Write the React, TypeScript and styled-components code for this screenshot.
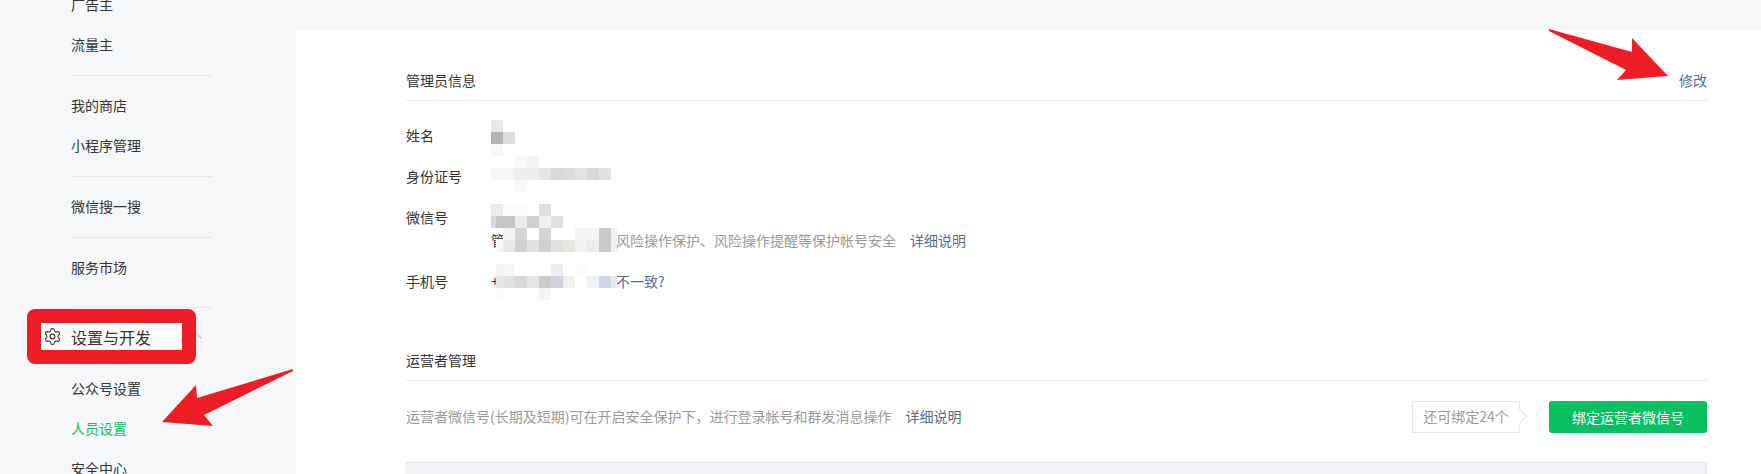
import React from 'react';
import styled, { createGlobalStyle } from 'styled-components';
import { Settings } from 'lucide-react';

const GlobalStyle = createGlobalStyle`
	html, body {
		margin: 0;
		padding: 0;
		height: 100%;
		overflow: hidden;
		background: #f6f7f9;
	}

	body {
		font-family: "Noto Sans CJK SC", "Noto Sans", sans-serif;
		font-size: 14px;
		color: #353535;
	}
`;

const Page = styled.div`
	position: relative;
	display: flex;
	width: 1761px;
	height: 474px;
	overflow: hidden;
`;

const Sidebar = styled.nav`
	flex: 0 0 296px;
	margin-top: -15px;
`;

const Group = styled.div<{ $tail?: number }>`
	width: 141px;
	margin-left: 71px;
	padding: 10px 0 ${(p) => p.$tail ?? 10}px;
	border-bottom: 1px solid #e4e6ea;
`;

const FirstGroup = styled(Group)`
	padding-top: 0;
`;

const NavItem = styled.div<{ $active?: boolean }>`
	height: 40px;
	line-height: 38px;
	color: ${(p) => (p.$active ? '#07c160' : '#353535')};
	white-space: nowrap;
`;

const OpenGroup = styled.div`
	padding-left: 71px;
`;

const GroupHead = styled.div`
	display: flex;
	align-items: center;
	height: 27px;
	margin: 15px 0 19px -30px;
`;

const HeadLabel = styled.div`
	position: relative;
	z-index: 1;
	display: flex;
	align-items: center;
	gap: 9px;
	box-sizing: border-box;
	width: 140px;
	height: 27px;
	padding-left: 2px;
	background: #fff;
	font-size: 16px;
	white-space: nowrap;

	&::before {
		content: '';
		position: absolute;
		inset: -14px -15px -14px -14px;
		border: 14px solid #ee1c25;
		border-radius: 8px;
		pointer-events: none;
	}
`;

const Chevron = styled.span`
	flex: none;
	width: 14px;
	height: 14px;
	margin-left: 4px;
	box-sizing: border-box;
	border-top: 1px solid #b4b4b4;
	border-left: 1px solid #b4b4b4;
	transform: translateY(1px) rotate(45deg);
`;

const Card = styled.main`
	flex: 1;
	margin-top: 30px;
	padding: 30px 54px 0 110px;
	background: #fff;
	border-radius: 3px 0 0 0;
`;

const SectionHead = styled.div`
	display: flex;
	align-items: center;
	justify-content: space-between;
	box-sizing: border-box;
	height: 41px;
	padding-bottom: 1px;
	border-bottom: 1px solid #e7e7eb;
`;

const Link = styled.a`
	color: #576b95;
	text-decoration: none;
`;

const InfoList = styled.div`
	padding: 15px 0 37px;
`;

const InfoRow = styled.div`
	display: flex;
	padding: 8px 0 10px;
	line-height: 23px;
`;

const RowLabel = styled.div`
	flex: 0 0 85px;
`;

const RowValue = styled.div`
	color: #9a9a9a;
`;

const ValueLine = styled.div`
	display: flex;
	white-space: nowrap;
`;

const Masked = styled.span<{ $width: number }>`
	display: inline-block;
	width: ${(p) => p.$width}px;
	overflow: hidden;
	color: #353535;
`;

const Gap = styled.span`
	width: 14px;
`;

const OperatorBar = styled.div`
	display: flex;
	align-items: center;
	height: 32px;
	margin-top: 20px;
`;

const Hint = styled.div`
	flex: 1;
	padding-bottom: 2px;
	color: #9a9a9a;
	white-space: nowrap;
`;

const HintLink = styled(Link)`
	margin-left: 14px;
`;

const Quota = styled.div`
	position: relative;
	box-sizing: border-box;
	width: 108px;
	height: 32px;
	line-height: 29px;
	margin-right: 29px;
	text-align: center;
	color: #9a9a9a;
	border: 1px solid #e7e7eb;
	background: #fff;

	&::after {
		content: '';
		position: absolute;
		top: 9px;
		right: -6px;
		width: 10px;
		height: 10px;
		background: #fff;
		border-top: 1px solid #e7e7eb;
		border-right: 1px solid #e7e7eb;
		transform: rotate(45deg);
	}
`;

const PrimaryButton = styled.button`
	width: 158px;
	height: 32px;
	padding: 0;
	border: 0;
	border-radius: 3px;
	background: #07c160;
	color: #fff;
	font: inherit;
`;

const TableHead = styled.div`
	height: 40px;
	margin-top: 29px;
	background: #f2f3f7;
	border: 1px solid #e7e7eb;
	border-bottom: 0;
`;

const Overlay = styled.svg`
	position: absolute;
	top: 0;
	left: 0;
	pointer-events: none;
`;

type Cell = [number, number, number, string];

// redacted patches from the screenshot: x, y, width, colour
const cellHeight = 12;
const mosaic: Cell[] = [
	[491, 120, 12, '#e9e8e8'],
	[491, 132, 12, '#b5b1ae'], [503, 132, 12, '#dcdcde'],
	[491, 144, 12, '#f6f6f6'],

	[515, 156, 12, '#f9f9f9'], [527, 156, 12, '#f3f3f3'],
	[491, 168, 12, '#f5f5f6'], [503, 168, 12, '#f5f5f6'], [515, 168, 12, '#eeeff1'], [527, 168, 12, '#eeeeef'],
	[539, 168, 12, '#e5e5e6'], [551, 168, 12, '#d9d9dd'], [563, 168, 12, '#dddbde'], [575, 168, 12, '#e4e4e0'],
	[587, 168, 12, '#d7d8dd'], [599, 168, 12, '#e3e2df'], [611, 168, 5, '#fcfcfe'],
	[515, 180, 12, '#f6f7f7'],

	[491, 204, 12, '#ebebeb'], [503, 204, 12, '#fafafa'], [515, 204, 12, '#fbfbfb'], [539, 204, 12, '#e0dfdf'],
	[491, 216, 5, '#d8d8d8'], [496, 216, 19, '#c4c5c5'], [515, 216, 12, '#eaeaea'], [527, 216, 12, '#cfcfd2'],
	[539, 216, 12, '#efeff0'], [551, 216, 12, '#e1e1e1'],
	[503, 228, 12, '#f2f2f2'], [515, 228, 12, '#d6d6d6'], [539, 228, 12, '#d5d5d5'],
	[575, 228, 12, '#f3f5f4'], [587, 228, 12, '#f4f4f4'], [599, 228, 12, '#c8c8c8'], [611, 228, 6, '#f0f0f0'],
	[496, 240, 7, '#f6f6f6'], [503, 240, 12, '#e8e9e9'], [515, 240, 12, '#d2d0d0'], [527, 240, 12, '#e0e1e1'],
	[539, 240, 12, '#cfcfcf'], [551, 240, 12, '#e4e0de'], [563, 240, 12, '#e8e6e3'], [575, 240, 12, '#f0f2f1'],
	[587, 240, 12, '#eeeceb'], [599, 240, 12, '#c9c9c9'], [611, 240, 6, '#f0f0f0'],

	[496, 264, 7, '#f3f2f2'], [503, 264, 12, '#f5f5f5'], [551, 264, 12, '#efefef'], [575, 264, 12, '#fbfbfe'],
	[496, 276, 7, '#e6e6e6'], [503, 276, 12, '#e2e2e2'], [515, 276, 12, '#d7d8d7'], [527, 276, 12, '#e6e6e4'],
	[539, 276, 12, '#cdcbc8'], [551, 276, 12, '#d0d3de'], [563, 276, 12, '#f0f0ee'], [587, 276, 12, '#f0f1f6'],
	[599, 276, 12, '#d0d5e3'], [611, 276, 6, '#e4e7f0'],
	[496, 288, 7, '#fbfbfb'], [539, 288, 12, '#f5f4f3'],
];

const Annotations = () => (
	<Overlay width={1761} height={474} viewBox="0 0 1761 474">
		{mosaic.map(([x, y, w, fill]) => (
			<rect key={`${x}-${y}`} x={x} y={y} width={w} height={cellHeight} fill={fill} />
		))}
		<polygon
			fill="#ee1c25"
			points="1549,29 1632,52 1632,38 1668,76 1617,80 1626,70 1549,31"
		/>
		<polygon
			fill="#ee1c25"
			points="162,422 196,385 197,398 293,369 293,371 204,415 213,426"
		/>
	</Overlay>
);

const App = () => (
	<Page>
		<GlobalStyle />
		<Sidebar>
			<FirstGroup>
				<NavItem>广告主</NavItem>
				<NavItem>流量主</NavItem>
			</FirstGroup>
			<Group>
				<NavItem>我的商店</NavItem>
				<NavItem>小程序管理</NavItem>
			</Group>
			<Group>
				<NavItem>微信搜一搜</NavItem>
			</Group>
			<Group $tail={19}>
				<NavItem>服务市场</NavItem>
			</Group>
			<OpenGroup>
				<GroupHead>
					<HeadLabel>
						<Settings size={19} strokeWidth={1.4} />
						设置与开发
					</HeadLabel>
					<Chevron />
				</GroupHead>
				<NavItem>公众号设置</NavItem>
				<NavItem $active>人员设置</NavItem>
				<NavItem>安全中心</NavItem>
			</OpenGroup>
		</Sidebar>
		<Card>
			<SectionHead>
				<span>管理员信息</span>
				<Link href="#">修改</Link>
			</SectionHead>
			<InfoList>
				<InfoRow>
					<RowLabel>姓名</RowLabel>
				</InfoRow>
				<InfoRow>
					<RowLabel>身份证号</RowLabel>
				</InfoRow>
				<InfoRow>
					<RowLabel>微信号</RowLabel>
					<RowValue>
						<ValueLine>
							<Masked $width={125}>&nbsp;</Masked>
						</ValueLine>
						<ValueLine>
							<Masked $width={125}>管</Masked>
							风险操作保护、风险操作提醒等保护帐号安全
							<Gap />
							<Link href="#">详细说明</Link>
						</ValueLine>
					</RowValue>
				</InfoRow>
				<InfoRow>
					<RowLabel>手机号</RowLabel>
					<RowValue>
						<ValueLine>
							<Masked $width={125}>+</Masked>
							<Link href="#">不一致?</Link>
						</ValueLine>
					</RowValue>
				</InfoRow>
			</InfoList>
			<SectionHead>
				<span>运营者管理</span>
			</SectionHead>
			<OperatorBar>
				<Hint>
					运营者微信号(长期及短期)可在开启安全保护下，进行登录帐号和群发消息操作
					<HintLink href="#">详细说明</HintLink>
				</Hint>
				<Quota>还可绑定24个</Quota>
				<PrimaryButton>绑定运营者微信号</PrimaryButton>
			</OperatorBar>
			<TableHead />
		</Card>
		<Annotations />
	</Page>
);

export default App;
